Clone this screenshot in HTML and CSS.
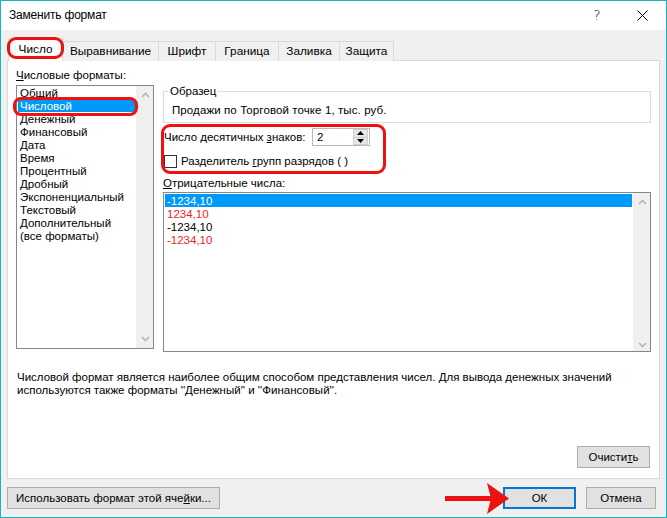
FILE: index.html
```html
<!DOCTYPE html>
<html lang="ru">
<head>
<meta charset="utf-8">
<title>Заменить формат</title>
<link rel="stylesheet" href="styles.css">
</head>
<body>
<div class="window">
  <div class="titlebar">
    <span class="title">Заменить формат</span>
    <span class="tb-btn tb-help">?</span>
    <span class="tb-btn tb-close"><svg width="11" height="11" viewBox="0 0 11 11"><path d="M0.5 0.5L10.5 10.5M10.5 0.5L0.5 10.5" stroke="#000" stroke-width="1" fill="none"/></svg></span>
  </div>

  <div class="tabs">
    <div class="tab active w-num">Число</div>
    <div class="tab first w-align">Выравнивание</div>
    <div class="tab w-font">Шрифт</div>
    <div class="tab w-border">Граница</div>
    <div class="tab w-fill">Заливка</div>
    <div class="tab w-prot">Защита</div>
  </div>

  <div class="panel">
    <div class="panel-main">
      <div class="left">
        <div class="label cat-label"><u>Ч</u>исловые форматы:</div>
        <div class="listbox cats">
          <div class="items">
            <div class="item">Общий</div>
            <div class="item sel">Числовой</div>
            <div class="item">Денежный</div>
            <div class="item">Финансовый</div>
            <div class="item">Дата</div>
            <div class="item">Время</div>
            <div class="item">Процентный</div>
            <div class="item">Дробный</div>
            <div class="item">Экспоненциальный</div>
            <div class="item">Текстовый</div>
            <div class="item">Дополнительный</div>
            <div class="item">(все форматы)</div>
          </div>
          <div class="vscroll">
            <svg width="9" height="6" viewBox="0 0 9 6"><path d="M1 5L4.5 1.5L8 5" stroke="#b4b4b4" stroke-width="1.6" fill="none"/></svg>
            <svg width="9" height="6" viewBox="0 0 9 6"><path d="M1 1L4.5 4.5L8 1" stroke="#b4b4b4" stroke-width="1.6" fill="none"/></svg>
          </div>
        </div>
      </div>

      <div class="right">
        <fieldset class="sample">
          <legend>Образец</legend>
          <div class="sample-text">Продажи по Торговой точке 1, тыс. руб.</div>
        </fieldset>

        <div class="row decimals">
          <span class="dec-label">Число десятичных <u>з</u>наков:</span>
          <div class="spin">
            <span class="spin-value">2</span>
            <div class="spin-btns">
              <div class="spin-btn"><svg width="7" height="4" viewBox="0 0 7 4"><path d="M0 4L3.5 0L7 4Z" fill="#000"/></svg></div>
              <div class="spin-btn"><svg width="7" height="4" viewBox="0 0 7 4"><path d="M0 0L3.5 4L7 0Z" fill="#000"/></svg></div>
            </div>
          </div>
        </div>

        <div class="row check">
          <span class="checkbox"></span>
          <span class="check-label">Разделитель <u>г</u>рупп разрядов ( )</span>
        </div>

        <div class="label neg-label"><u>О</u>трицательные числа:</div>
        <div class="listbox neg">
          <div class="items">
            <div class="item sel">-1234,10</div>
            <div class="item red">1234,10</div>
            <div class="item">-1234,10</div>
            <div class="item red">-1234,10</div>
          </div>
          <div class="vscroll">
            <svg width="9" height="6" viewBox="0 0 9 6"><path d="M1 5L4.5 1.5L8 5" stroke="#b4b4b4" stroke-width="1.6" fill="none"/></svg>
            <svg width="9" height="6" viewBox="0 0 9 6"><path d="M1 1L4.5 4.5L8 1" stroke="#b4b4b4" stroke-width="1.6" fill="none"/></svg>
          </div>
        </div>
      </div>
    </div>

    <div class="desc">
      <div class="desc-line">Числовой формат является наиболее общим способом представления чисел. Для вывода денежных значений</div>
      <div class="desc-line">используются также форматы ''Денежный'' и ''Финансовый''.</div>
    </div>

    <div class="clear-row">
      <div class="btn btn-clear">Очисти<u>т</u>ь</div>
    </div>
  </div>

  <div class="footer">
    <div class="btn btn-use">Использовать формат этой яче<u>й</u>ки...</div>
    <div class="spacer"></div>
    <div class="btn btn-ok">ОК</div>
    <div class="btn btn-cancel">Отмена</div>
  </div>

  <div class="mark mark-tab"></div>
  <div class="mark mark-item"></div>
  <div class="mark mark-dec"></div>
  <svg class="arrow" width="72" height="36" viewBox="442 480 72 36">
    <path d="M445 496H491V501H445Z" fill="#ee1111"/>
    <path d="M487 483L509 498.5L487 514L491 498.5Z" fill="#ee1111"/>
  </svg>
</div>
</body>
</html>
```

FILE: styles.css
```css
* { box-sizing: border-box; }
html, body { margin: 0; padding: 0; }
body {
  width: 667px;
  height: 518px;
  overflow: hidden;
  font-family: "Liberation Sans", Arial, sans-serif;
  font-size: 11.5px;
  color: #000;
  background: #f0f0f0;
}
u { text-decoration: underline; text-underline-offset: 1px; }

.window {
  position: relative;
  width: 667px;
  height: 518px;
  border: 1px solid #18b4c6;
  background: #f0f0f0;
  display: flex;
  flex-direction: column;
}

/* title bar */
.titlebar {
  height: 29px;
  flex: none;
  background: #fff;
  display: flex;
  align-items: center;
  padding-left: 8px;
}
.title { flex: 1; font-size: 12px; letter-spacing: -0.2px; padding-bottom: 1px; }
.tb-btn {
  width: 46px;
  height: 29px;
  display: flex;
  align-items: center;
  justify-content: center;
}
.tb-help { font-size: 14px; font-family: "DejaVu Sans", sans-serif; font-weight: 300; padding-bottom: 2px; }
.tb-close { padding-bottom: 1px; padding-right: 2px; }

/* tabs */
.tabs {
  height: 31px;
  flex: none;
  display: flex;
  align-items: flex-end;
  padding-left: 7px;
  position: relative;
  z-index: 2;
  margin-bottom: -1px;
}
.tab {
  height: 20px;
  border: 1px solid #d9d9d9;
  border-left: none;
  border-bottom: none;
  background: #f0f0f0;
  display: flex;
  align-items: center;
  justify-content: center;
  padding-bottom: 1px;
  font-size: 11.8px;
}
.tab.active {
  height: 23px;
  background: #fff;
  border-left: 1px solid #d9d9d9;
  padding-bottom: 3px;
}
.w-num { width: 55px; }
.w-align { width: 96px; }
.w-font { width: 57px; }
.w-border { width: 63px; }
.w-fill { width: 61px; }
.w-prot { width: 54px; }

/* panel */
.panel {
  height: 419px;
  flex: none;
  margin: 0 6px 0 6px;
  background: #fff;
  border: 1px solid #d9d9d9;
  display: flex;
  flex-direction: column;
  position: relative;
  z-index: 1;
}
.panel-main {
  display: flex;
  padding: 8px 7px 0 8px;
  gap: 9px;
}
.label { line-height: 13px; height: 16px; }
.left { width: 138px; flex: none; }
.right { width: 488px; flex: none; }

.listbox {
  border: 1px solid #828790;
  background: #fff;
  display: flex;
}
.listbox .items { flex: 1; padding: 0 1px; overflow: hidden; }
.item {
  height: 13px;
  line-height: 12px;
  padding: 1px 0 0 2px;
  white-space: nowrap;
}
.item.sel { background: #0099f7; color: #fff; }
.item.red { color: #f41c1c; }
.cats { height: 264px; }
.vscroll {
  width: 17px;
  flex: none;
  background: #f0f0f0;
  display: flex;
  flex-direction: column;
  justify-content: space-between;
  align-items: center;
  padding: 6px 0 6px 1px;
}

/* right column */
.sample {
  margin: 15px 0 0 0;
  height: 39px;
  border: 1px solid #dcdcdc;
  padding: 0 0 0 8px;
}
.sample legend {
  padding: 0 2px;
  margin-left: -4px;
  line-height: 14px;
}
.sample-text { margin-top: 5px; line-height: 14px; letter-spacing: 0.1px; }

.row { display: flex; align-items: center; }
.decimals { margin-top: 5px; height: 18px; }
.dec-label { width: 149px; padding-left: 1px; flex: none; }
.spin {
  width: 58px;
  height: 18px;
  border: 1px solid #b9b9b9;
  display: flex;
  align-items: center;
}
.spin-value { flex: 1; padding-left: 4px; line-height: 14px; }
.spin-btns {
  width: 15px;
  height: 16px;
  display: flex;
  flex-direction: column;
  margin-right: 1px;
}
.spin-btn {
  flex: 1;
  background: #e6e6e6;
  border: 1px solid #cfcfcf;
  display: flex;
  align-items: center;
  justify-content: center;
}
.spin-btn + .spin-btn { border-top: none; }

.check { margin-top: 9px; height: 13px; }
.checkbox {
  width: 13px;
  height: 13px;
  border: 1px solid #333;
  background: #fff;
  margin-left: 1px;
  flex: none;
}
.check-label { margin-left: 4px; line-height: 13px; }

.neg-label { margin-top: 9px; height: 15px; }
.neg { height: 160px; }
.neg .items { padding-top: 1px; }
.neg .vscroll { padding: 6px 0 3px 1px; }

/* description */
.desc {
  margin-top: 19px;
  padding-left: 9px;
}
.desc-line { line-height: 13px; height: 13px; white-space: nowrap; }
.clear-row {
  margin-top: auto;
  display: flex;
  justify-content: flex-end;
  padding: 0 9px 10px 0;
}

/* buttons */
.btn {
  height: 22px;
  background: #e1e1e1;
  border: 1px solid #adadad;
  display: flex;
  align-items: center;
  justify-content: center;
  white-space: nowrap;
  padding-bottom: 1px;
}
.btn-clear { width: 73px; }
.footer {
  display: flex;
  align-items: center;
  margin-top: 8px;
  padding: 0 10px 0 6px;
}
.btn-use { width: 213px; }
.spacer { flex: 1; }
.btn-ok { width: 73px; border: 2px solid #0078d7; margin-right: 10px; }
.btn-cancel { width: 70px; }

/* annotation overlays */
.mark {
  position: absolute;
  border: 3px solid #ee1111;
  border-radius: 9px;
  z-index: 5;
}
.mark-tab { left: 6px; top: 36px; width: 57px; height: 22px; }
.mark-item { left: 12px; top: 96px; width: 125px; height: 19px; border-radius: 8px; }
.mark-dec { left: 160px; top: 123px; width: 225px; height: 50px; border-radius: 9px; }
.arrow { position: absolute; left: 441px; top: 479px; z-index: 6; }
```
